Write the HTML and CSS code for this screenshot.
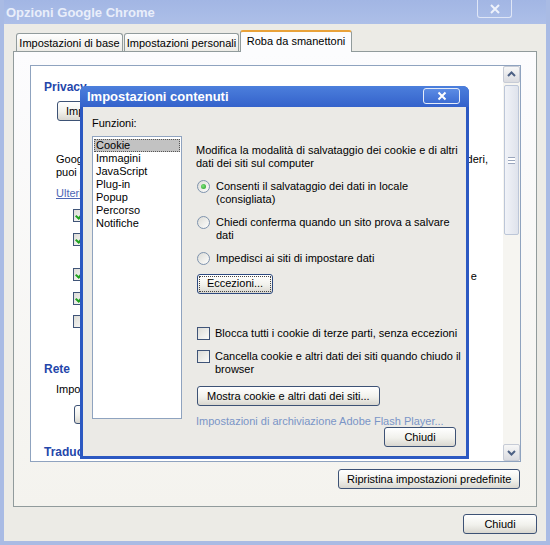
FILE: index.html
```html
<!DOCTYPE html>
<html lang="it">

<head>
    <meta charset="UTF-8">
    <meta name="viewport" content="width=device-width, initial-scale=1.0">
    <title>Opzioni Google Chrome</title>
    <link rel="stylesheet" href="styles.css">
</head>

<body>
    <div class="window">
        <div class="titlebar">
            <span class="title">Opzioni Google Chrome</span>
            <span class="win-close">
                <svg width="12" height="12" viewBox="0 0 12 12"><path d="M2 2 L10 10 M10 2 L2 10" stroke="#eef2fb" stroke-width="2" fill="none"/></svg>
            </span>
        </div>

        <div class="client">
            <div class="tabs">
                <div class="tab tab-base">Impostazioni di base</div>
                <div class="tab tab-pers">Impostazioni personali</div>
                <div class="tab tab-adv active">Roba da smanettoni</div>
            </div>

            <div class="panel">
                <div class="scrollbox">
                    <div class="scroll-content">
                        <div class="section-title privacy">Privacy</div>
                        <button class="btn btn-content">Impostazioni contenuti...</button>
                        <div class="intro">
                            <span class="intro-first">Google Chrome utilizza servizi web per migliorare la navigazione. Se lo desideri,</span>
                            <span>puoi disattivare facoltativamente questi servizi.</span>
                        </div>
                        <a class="more-link">Ulteriori informazioni</a>

                        <div class="opt opt-1"><span class="cb checked"></span><span>Utilizza un servizio web per risolvere errori di navigazione</span></div>
                        <div class="opt opt-2"><span class="cb checked"></span><span>Utilizza un servizio di suggerimenti</span></div>
                        <div class="opt opt-3"><span class="cb checked"></span><span class="opt-wide">Attiva la protezione da phishing e</span></div>
                        <div class="opt opt-4"><span class="cb checked"></span><span>Invia statistiche di utilizzo a Google</span></div>
                        <div class="opt opt-5"><span class="cb"></span><span>Precarica le risorse</span></div>

                        <div class="section-title rete">Rete</div>
                        <div class="net-text">Impostazioni proxy del sistema</div>
                        <button class="btn btn-proxy">Modifica impostazioni proxy...</button>

                        <div class="section-title traduci">Traduci</div>
                    </div>
                    <div class="scrollbar">
                        <div class="sb-btn">
                            <svg width="15" height="15" viewBox="0 0 15 15"><path d="M4 9 L7.5 5.5 L11 9" stroke="#4d6185" stroke-width="2" fill="none"/></svg>
                        </div>
                        <div class="sb-thumb"><span class="grip"></span></div>
                        <div class="sb-track"></div>
                        <div class="sb-btn">
                            <svg width="15" height="15" viewBox="0 0 15 15"><path d="M4 6 L7.5 9.5 L11 6" stroke="#4d6185" stroke-width="2" fill="none"/></svg>
                        </div>
                    </div>
                </div>
                <div class="panel-actions">
                    <button class="btn btn-reset">Ripristina impostazioni predefinite</button>
                </div>
            </div>

            <div class="footer">
                <button class="btn btn-close">Chiudi</button>
            </div>
        </div>

        <div class="dialog">
            <div class="dlg-title">
                <span>Impostazioni contenuti</span>
                <span class="dlg-close">
                    <svg width="10" height="10" viewBox="0 0 10 10"><path d="M1.5 1.5 L8.5 8.5 M8.5 1.5 L1.5 8.5" stroke="#fff" stroke-width="2" fill="none"/></svg>
                </span>
            </div>
            <div class="dlg-body">
                <div class="label">Funzioni:</div>
                <div class="dlg-main">
                    <ul class="listbox">
                        <li class="selected">Cookie</li>
                        <li>Immagini</li>
                        <li>JavaScript</li>
                        <li>Plug-in</li>
                        <li>Popup</li>
                        <li>Percorso</li>
                        <li>Notifiche</li>
                    </ul>
                    <div class="options">
                        <p class="desc">Modifica la modalità di salvataggio dei cookie e di altri<br>dati dei siti sul computer</p>

                        <div class="choice first"><span class="radio on"></span><span>Consenti il salvataggio dei dati in locale<br>(consigliata)</span></div>
                        <div class="choice"><span class="radio"></span><span>Chiedi conferma quando un sito prova a salvare<br>dati</span></div>
                        <div class="choice"><span class="radio"></span><span>Impedisci ai siti di impostare dati</span></div>

                        <button class="btn btn-exc"><span class="focus">Eccezioni...</span></button>

                        <div class="check first"><span class="cb"></span><span>Blocca tutti i cookie di terze parti, senza eccezioni</span></div>
                        <div class="check"><span class="cb"></span><span>Cancella cookie e altri dati dei siti quando chiudo il<br>browser</span></div>

                        <button class="btn btn-show">Mostra cookie e altri dati dei siti...</button>
                        <a class="flash-link">Impostazioni di archiviazione Adobe Flash Player...</a>
                        <div class="dlg-actions">
                            <button class="btn btn-dlg-close">Chiudi</button>
                        </div>
                    </div>
                </div>
            </div>
        </div>
    </div>
</body>

</html>
```

FILE: styles.css
```css
* {
    margin: 0;
    padding: 0;
    box-sizing: border-box;
}

body {
    font-family: "Liberation Sans", Arial, sans-serif;
    font-size: 11px;
    color: #000;
    background: #fff;
}

.window {
    position: relative;
    width: 550px;
    height: 545px;
    background: #a9bbe4;
    padding: 0 4px 4px;
    display: flex;
    flex-direction: column;
    overflow: hidden;
}

.titlebar {
    height: 24px;
    display: flex;
    align-items: center;
    padding-left: 2px;
    background: linear-gradient(#a2b6e4, #adbfe8);
}

.title {
    color: #e9eefa;
    font-weight: bold;
    font-size: 13px;
}

.win-close {
    margin-left: auto;
    margin-right: 34px;
    align-self: flex-start;
    width: 35px;
    height: 18px;
    border: 1px solid #dfe6f6;
    border-top: none;
    border-radius: 0 0 3px 3px;
    display: flex;
    align-items: center;
    justify-content: center;
}

.client {
    flex: 1;
    background: #ecebe6;
    padding: 6px 9px 0;
    display: flex;
    flex-direction: column;
}

/* tabs */
.tabs {
    display: flex;
    align-items: flex-end;
    height: 21px;
    padding-left: 3px;
    gap: 1px;
    position: relative;
    z-index: 1;
}

.tab {
    height: 18px;
    border: 1px solid #919b9c;
    border-bottom: none;
    border-radius: 3px 3px 0 0;
    background: linear-gradient(#fefefe, #ecebe6);
    display: flex;
    align-items: center;
    justify-content: center;
    white-space: nowrap;
}

.tab-base {
    width: 107px;
}

.tab-pers {
    width: 115px;
}

.tab-adv {
    width: 112px;
}

.tab.active {
    height: 22px;
    background: #fcfcfe;
    border-top: 2px solid #e9a23a;
    margin-bottom: -1px;
    padding-bottom: 2px;
}

.panel {
    height: 456px;
    border: 1px solid #919b9c;
    background: linear-gradient(#fcfcfe, #f4f3ee);
    padding: 13px 15px 17px 16px;
    display: flex;
    flex-direction: column;
}

.scrollbox {
    height: 397px;
    border: 1px solid #8fa3bf;
    background: #fff;
    display: flex;
}

.scroll-content {
    flex: 1;
    padding-left: 13px;
    overflow: hidden;
    white-space: nowrap;
}

.section-title {
    font-weight: bold;
    font-size: 12px;
    line-height: 16px;
    color: #2446aa;
}

.privacy {
    margin-top: 13px;
}

.btn {
    font-family: inherit;
    font-size: 11px;
    height: 20px;
    border: 1px solid #3d5275;
    border-radius: 3px;
    background: linear-gradient(#ffffff, #f1f1ec 55%, #d9d7d0);
    padding: 0 8px;
    color: #000;
    white-space: nowrap;
}

.btn-content {
    display: block;
    margin: 6px 0 0 13px;
    height: 20px;
}

.intro {
    margin: 32px 0 0 12px;
    width: 432px;
    line-height: 13px;
}

.intro span {
    display: block;
}

.intro-first {
    text-align: justify;
    text-align-last: justify;
}

.more-link {
    display: block;
    margin: 8px 0 0 12px;
    line-height: 13px;
    color: #4e66b4;
    text-decoration: underline;
}

.opt {
    display: flex;
    align-items: center;
    gap: 6px;
    margin-left: 29px;
    height: 13px;
}

.opt-1 {
    margin-top: 9px;
}

.opt-2 {
    margin-top: 11px;
}

.opt-3 {
    margin-top: 22px;
}

.opt-4 {
    margin-top: 11px;
}

.opt-5 {
    margin-top: 10px;
}

.opt-wide {
    display: block;
    width: 385px;
    text-align: justify;
    text-align-last: justify;
    padding-top: 3px;
}

.cb {
    flex: none;
    position: relative;
    width: 13px;
    height: 13px;
    border: 1px solid #3f5478;
    background: linear-gradient(135deg, #dcdcd7, #fbfbf9);
}

.cb.checked::after {
    content: "";
    position: absolute;
    left: 3px;
    top: 1px;
    width: 3px;
    height: 6px;
    border: solid #21a121;
    border-width: 0 2px 2px 0;
    transform: rotate(40deg);
}

.rete {
    margin-top: 33px;
}

.net-text {
    margin: 6px 0 0 12px;
    line-height: 13px;
}

.btn-proxy {
    display: block;
    margin: 9px 0 0 30px;
    height: 19px;
}

.traduci {
    margin-top: 20px;
}

/* scrollbar */
.scrollbar {
    width: 17px;
    display: flex;
    flex-direction: column;
    background: #f6f5f1;
}

.sb-btn {
    height: 17px;
    border: 1px solid #c6cbd6;
    border-radius: 2px;
    background: linear-gradient(#f7f7f7, #dadbe0);
    display: flex;
    align-items: center;
    justify-content: center;
}

.sb-thumb {
    height: 150px;
    margin: 2px 1px 0;
    border: 1px solid #bcc6d8;
    border-radius: 2px;
    background: linear-gradient(90deg, #f1f3f8, #dfe3ec);
    display: flex;
    align-items: center;
    justify-content: center;
}

.grip {
    width: 7px;
    height: 7px;
    border-top: 1px solid #9aa6bd;
    border-bottom: 1px solid #9aa6bd;
    background: linear-gradient(#fff 0 2px, #9aa6bd 2px 3px, #fff 3px);
}

.sb-track {
    flex: 1;
}

.panel-actions {
    margin-top: 7px;
    display: flex;
    justify-content: flex-end;
    padding-right: 1px;
}

.btn-reset {
    width: 182px;
}

.footer {
    margin-top: 7px;
    display: flex;
    justify-content: flex-end;
}

.btn-close {
    width: 74px;
}

/* dialog */
.dialog {
    position: absolute;
    left: 80px;
    top: 86px;
    width: 389px;
    height: 373px;
    background: #2c59c2;
    border-radius: 6px 6px 0 0;
    padding: 0 3px 3px;
    display: flex;
    flex-direction: column;
}

.dlg-title {
    height: 21px;
    margin: 0 -3px;
    padding-left: 7px;
    display: flex;
    align-items: center;
    color: #fff;
    font-weight: bold;
    font-size: 13px;
    border-radius: 6px 6px 0 0;
    background: linear-gradient(#4c7fdc, #3462cb);
}

.dlg-close {
    margin-left: auto;
    margin-right: 9px;
    align-self: flex-start;
    margin-top: 2px;
    width: 37px;
    height: 16px;
    border: 1px solid #e6ecf8;
    border-radius: 3px;
    background: linear-gradient(#5c8ce4, #3d6dd3);
    display: flex;
    align-items: center;
    justify-content: center;
}

.dlg-body {
    flex: 1;
    background: #ebeae6;
    padding: 10px 10px 0 9px;
}

.label {
    line-height: 13px;
}

.dlg-main {
    display: flex;
    margin-top: 6px;
}

.listbox {
    list-style: none;
    width: 90px;
    height: 283px;
    border: 1px solid #8fa3bf;
    background: #fff;
    padding: 2px 1px;
}

.listbox li {
    line-height: 13px;
    padding-left: 2px;
}

.listbox li.selected {
    background: #c2c2c2;
    outline: 1px dotted #555;
    outline-offset: -1px;
}

.options {
    width: 260px;
    margin: 8px 0 0 14px;
    white-space: nowrap;
}

.desc {
    line-height: 13px;
}

.choice,
.check {
    display: flex;
    align-items: flex-start;
    line-height: 13px;
    margin-top: 10px;
}

.choice.first {
    margin-top: 10px;
}

.radio {
    flex: none;
    position: relative;
    width: 13px;
    height: 13px;
    margin: 0 6px 0 1px;
    border: 1px solid #7e93ad;
    border-radius: 50%;
    background: linear-gradient(135deg, #dcdcd7, #fdfdfc);
}

.radio.on::after {
    content: "";
    position: absolute;
    left: 3px;
    top: 3px;
    width: 5px;
    height: 5px;
    border-radius: 50%;
    background: radial-gradient(circle at 40% 40%, #7ee37e, #1e9a1e);
}

.check .cb {
    margin: 0 5px 0 1px;
}

.check.first {
    margin-top: 33px;
}

.btn-exc {
    display: block;
    margin: 9px 0 0 1px;
    width: 76px;
    padding: 2px;
    border-color: #2d4a80;
}

.focus {
    display: block;
    height: 14px;
    line-height: 13px;
    outline: 1px dotted #444;
    outline-offset: 0;
}

.btn-show {
    display: block;
    margin: 10px 0 0 1px;
    padding: 0 9px;
}

.flash-link {
    display: block;
    margin-top: 9px;
    line-height: 13px;
    color: #7a95c6;
}

.dlg-actions {
    display: flex;
    justify-content: flex-end;
    margin-top: -1px;
}

.btn-dlg-close {
    width: 72px;
}
```
